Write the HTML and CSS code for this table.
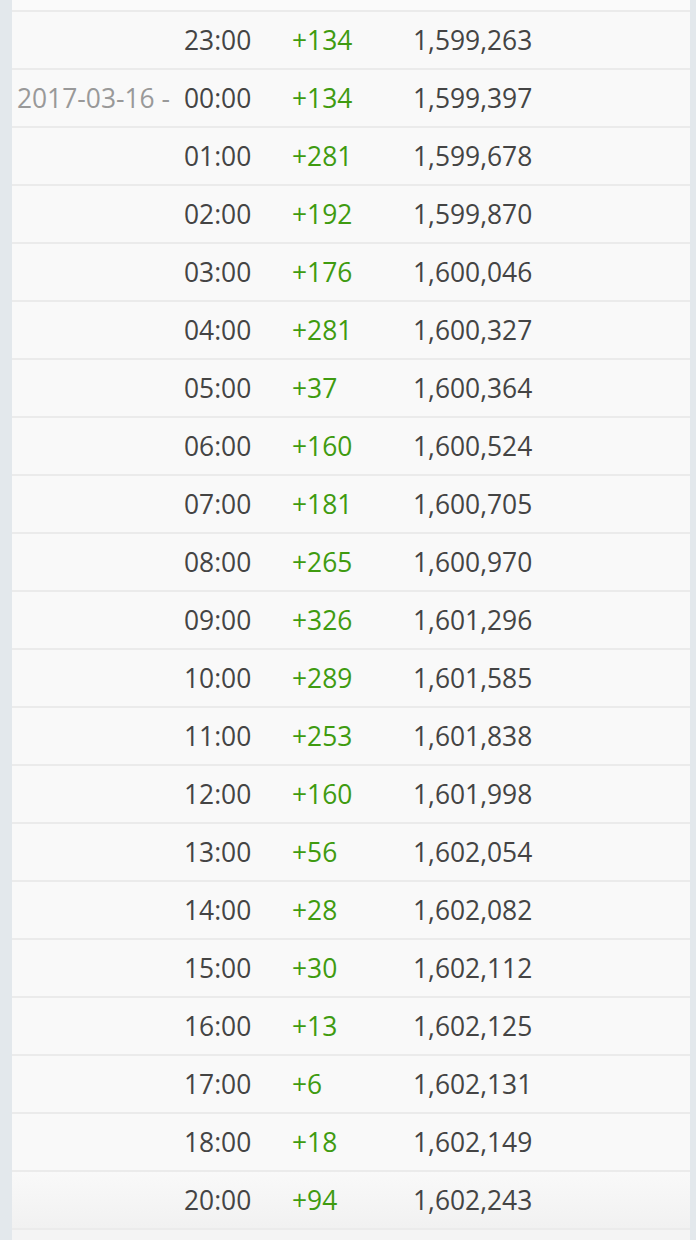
FILE: index.html
```html
<!DOCTYPE html>
<html>
<head>
<meta charset="utf-8">
<link rel="stylesheet" href="styles.css">
</head>
<body>
<div class="panel">
  <div class="tail"></div>
  <div class="row"><span class="date"></span><span class="time">23:00</span><span class="chg">+134</span><span class="total">1,599,263</span></div>
  <div class="row"><span class="date">2017-03-16 -</span><span class="time">00:00</span><span class="chg">+134</span><span class="total">1,599,397</span></div>
  <div class="row"><span class="date"></span><span class="time">01:00</span><span class="chg">+281</span><span class="total">1,599,678</span></div>
  <div class="row"><span class="date"></span><span class="time">02:00</span><span class="chg">+192</span><span class="total">1,599,870</span></div>
  <div class="row"><span class="date"></span><span class="time">03:00</span><span class="chg">+176</span><span class="total">1,600,046</span></div>
  <div class="row"><span class="date"></span><span class="time">04:00</span><span class="chg">+281</span><span class="total">1,600,327</span></div>
  <div class="row"><span class="date"></span><span class="time">05:00</span><span class="chg">+37</span><span class="total">1,600,364</span></div>
  <div class="row"><span class="date"></span><span class="time">06:00</span><span class="chg">+160</span><span class="total">1,600,524</span></div>
  <div class="row"><span class="date"></span><span class="time">07:00</span><span class="chg">+181</span><span class="total">1,600,705</span></div>
  <div class="row"><span class="date"></span><span class="time">08:00</span><span class="chg">+265</span><span class="total">1,600,970</span></div>
  <div class="row"><span class="date"></span><span class="time">09:00</span><span class="chg">+326</span><span class="total">1,601,296</span></div>
  <div class="row"><span class="date"></span><span class="time">10:00</span><span class="chg">+289</span><span class="total">1,601,585</span></div>
  <div class="row"><span class="date"></span><span class="time">11:00</span><span class="chg">+253</span><span class="total">1,601,838</span></div>
  <div class="row"><span class="date"></span><span class="time">12:00</span><span class="chg">+160</span><span class="total">1,601,998</span></div>
  <div class="row"><span class="date"></span><span class="time">13:00</span><span class="chg">+56</span><span class="total">1,602,054</span></div>
  <div class="row"><span class="date"></span><span class="time">14:00</span><span class="chg">+28</span><span class="total">1,602,082</span></div>
  <div class="row"><span class="date"></span><span class="time">15:00</span><span class="chg">+30</span><span class="total">1,602,112</span></div>
  <div class="row"><span class="date"></span><span class="time">16:00</span><span class="chg">+13</span><span class="total">1,602,125</span></div>
  <div class="row"><span class="date"></span><span class="time">17:00</span><span class="chg">+6</span><span class="total">1,602,131</span></div>
  <div class="row"><span class="date"></span><span class="time">18:00</span><span class="chg">+18</span><span class="total">1,602,149</span></div>
  <div class="row last"><span class="date"></span><span class="time">20:00</span><span class="chg">+94</span><span class="total">1,602,243</span></div>
  <div class="row next"></div>
</div>
</body>
</html>
```
FILE: styles.css
```css
html, body {
  margin: 0;
  padding: 0;
  background: #e3e8ec;
  height: 1240px;
  overflow: hidden;
}
.panel {
  margin: 0 6px 0 12px;
  background: #f9f9f9;
  font-family: "Open Sans", "Liberation Sans", sans-serif;
  font-size: 26.4px;
  color: #444;
}
.tail {
  height: 10px;
  background: #fafafa;
}
.row {
  display: grid;
  grid-template-columns: 172px 108px 121px 1fr;
  align-items: center;
  height: 56px;
  border-top: 2px solid #ebebeb;
  background: #f9f9f9;
  line-height: 1;
}
.row.last {
  background: linear-gradient(#f9f9f9, #f1f1f1);
}
.row.next {
  background: #f4f4f4;
}
.date {
  text-align: right;
  padding-right: 14px;
  color: #999;
  white-space: nowrap;
}
.chg {
  color: #3f9b10;
}
```
